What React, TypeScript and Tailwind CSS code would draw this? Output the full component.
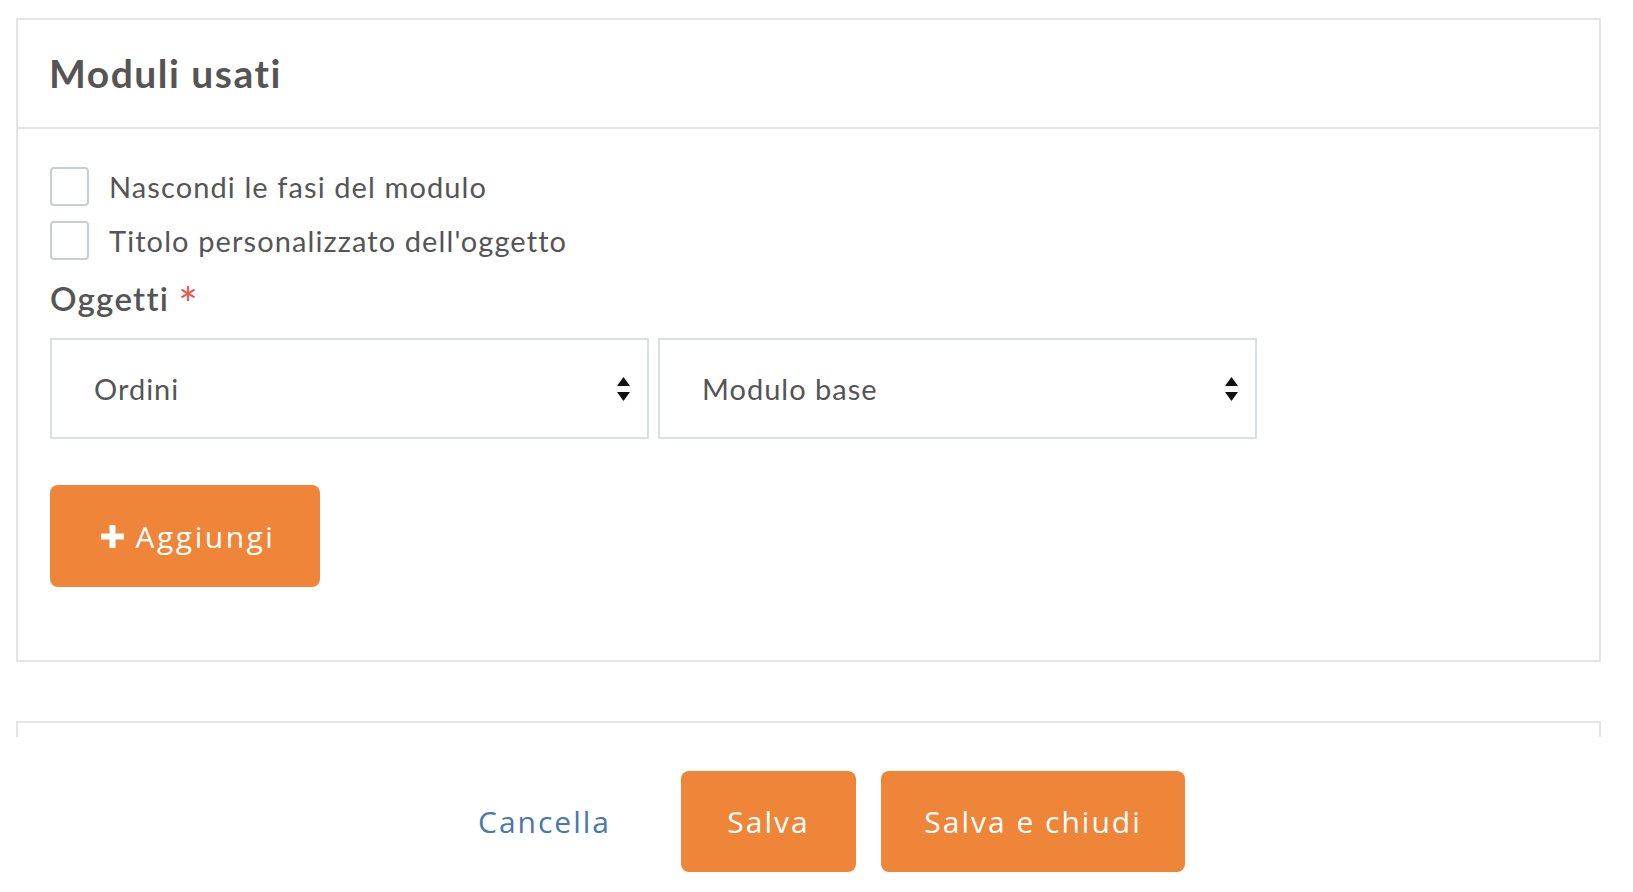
import { useState } from "react";

const sans = { fontFamily: "Lato, 'Noto Sans', sans-serif" };
const btnFont = { fontFamily: "'Open Sans', 'Noto Sans', sans-serif" };

function Arrows() {
  return (
    <svg width="13" height="24" viewBox="0 0 13 24" className="shrink-0">
      <path d="M6.5 0 L13 9 L0 9 Z" fill="#111" />
      <path d="M0 15 L13 15 L6.5 24 Z" fill="#111" />
    </svg>
  );
}

function FakeSelect({ value }: { value: string }) {
  return (
    <div className="flex h-[101px] w-[599px] items-center justify-between border-2 border-[#d9dee7] bg-white pl-[42px] pr-[17px]">
      <span className="text-[29px] tracking-[1px] text-[#555555]">{value}</span>
      <Arrows />
    </div>
  );
}

function Check({ label }: { label: string }) {
  const [on, setOn] = useState(false);
  return (
    <label className="flex h-[39px] cursor-pointer items-center gap-[20px]">
      <span
        onClick={() => setOn(!on)}
        className="flex h-[39px] w-[39px] items-center justify-center rounded-[4px] border-2 border-[#c9cdd4] bg-white"
      >
        {on && <span className="h-[17px] w-[17px] bg-[#ee8539]" />}
      </span>
      <span className="text-[29px] tracking-[1.1px] text-[#555555]">
        {label}
      </span>
    </label>
  );
}

export default function App() {
  return (
    <div
      className="relative h-[892px] overflow-hidden bg-white pl-[16px] pr-[32px] pt-[18px]"
      style={sans}
    >
      <div className="border-2 border-[#e4e4e4]">
        <div className="flex h-[109px] items-center border-b-2 border-[#e4e4e4] px-[31px]">
          <h1 className="text-[39px] font-bold tracking-[1.5px] text-[#555555]">
            Moduli usati
          </h1>
        </div>

        <div className="px-[32px] pb-[73px] pt-[38px]">
          <div className="flex flex-col gap-[15px]">
            <Check label="Nascondi le fasi del modulo" />
            <Check label="Titolo personalizzato dell'oggetto" />
          </div>

          <div className="mt-[15px] flex h-[48px] items-center">
            <span className="text-[33px] font-semibold tracking-[1.3px] text-[#555555]">
              Oggetti
            </span>
            <span className="ml-[9px] mt-[10px] text-[46px] leading-none text-[#e8574a]">
              *
            </span>
          </div>

          <div className="mt-[15px] flex gap-[9px]">
            <FakeSelect value="Ordini" />
            <FakeSelect value="Modulo base" />
          </div>

          <button
            className="mt-[46px] flex h-[102px] w-[270px] items-center justify-center gap-[12px] rounded-[8px] bg-[#ee8539] pl-[6px] text-[30px] tracking-[2.5px] text-white"
            style={btnFont}
          >
            <svg width="23" height="23" viewBox="0 0 23 23">
              <path d="M8.5 0 H14.5 V8.5 H23 V14.5 H14.5 V23 H8.5 V14.5 H0 V8.5 H8.5 Z" fill="#fff" />
            </svg>
            Aggiungi
          </button>
        </div>
      </div>

      <div className="mt-[59px] h-[120px] border-2 border-[#e4e4e4]" />

      <div className="absolute bottom-0 left-0 right-0 flex h-[155px] items-start justify-center gap-[25px] bg-white pl-[30px] pt-[34px]">
        <button
          className="mr-[45px] flex h-[101px] items-center text-[30px] tracking-[2px] text-[#4a78aa]"
          style={btnFont}
        >
          Cancella
        </button>
        <button
          className="h-[101px] w-[175px] rounded-[8px] bg-[#ee8539] text-[30px] tracking-[2px] text-white"
          style={btnFont}
        >
          Salva
        </button>
        <button
          className="h-[101px] w-[304px] rounded-[8px] bg-[#ee8539] text-[30px] tracking-[2px] text-white"
          style={btnFont}
        >
          Salva e chiudi
        </button>
      </div>
    </div>
  );
}
